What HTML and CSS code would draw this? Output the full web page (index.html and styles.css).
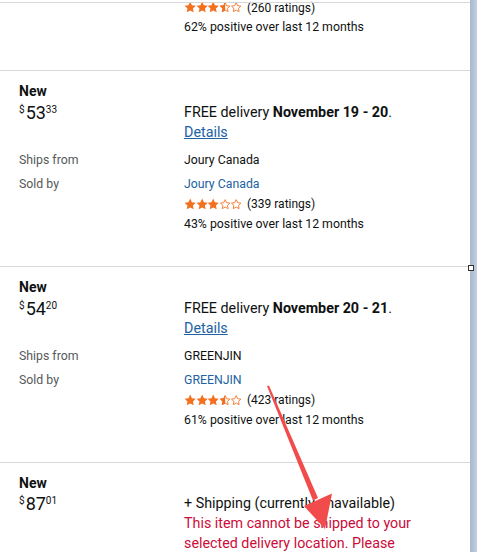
FILE: index.html
```html
<!DOCTYPE html>
<html lang="en">
<head>
<meta charset="utf-8">
<title>Other sellers</title>
<link rel="stylesheet" href="styles.css">
</head>
<body>
<svg class="defs" width="0" height="0" aria-hidden="true">
  <defs>
    <symbol id="s-full" viewBox="0 0 24 24">
      <path d="M12 1.2l3.3 6.9 7.5 1-5.5 5.2 1.4 7.5L12 18.2l-6.7 3.6 1.4-7.5-5.5-5.2 7.5-1z" fill="#f3701f"/>
    </symbol>
    <symbol id="s-empty" viewBox="0 0 24 24">
      <path d="M12 3.2l2.8 5.8 6.3.9-4.6 4.4 1.1 6.3L12 17.6l-5.6 3 1.1-6.3-4.6-4.4 6.3-.9z" fill="none" stroke="#f3701f" stroke-width="1.7" stroke-linejoin="round"/>
    </symbol>
    <clipPath id="half-clip"><rect x="0" y="0" width="12" height="24"/></clipPath>
    <symbol id="s-half" viewBox="0 0 24 24">
      <path d="M12 3.2l2.8 5.8 6.3.9-4.6 4.4 1.1 6.3L12 17.6l-5.6 3 1.1-6.3-4.6-4.4 6.3-.9z" fill="none" stroke="#f3701f" stroke-width="1.7" stroke-linejoin="round"/>
      <path d="M12 1.2l3.3 6.9 7.5 1-5.5 5.2 1.4 7.5L12 18.2l-6.7 3.6 1.4-7.5-5.5-5.2 7.5-1z" fill="#f3701f" clip-path="url(#half-clip)"/>
    </symbol>
  </defs>
</svg>

<div class="frame">
  <main class="offers">
    <section class="offer offer-partial">
      <div class="row">
        <div></div>
        <div class="seller">
          <div class="rating rating-first">
            <span class="stars"><svg><use href="#s-full"/></svg><svg><use href="#s-full"/></svg><svg><use href="#s-full"/></svg><svg><use href="#s-half"/></svg><svg><use href="#s-empty"/></svg></span>
            <span>(260 ratings)</span>
          </div>
          <div class="positive positive-first">62% positive over last 12 months</div>
        </div>
      </div>
    </section>

    <section class="offer">
      <div class="row row-cond"><div class="cond">New</div><div></div></div>
      <div class="row row-price">
        <div class="price"><span class="sym">$</span><span class="whole">53</span><span class="frac">33</span></div>
        <div class="delivery">FREE delivery <b>November 19 - 20</b>.</div>
      </div>
      <div class="row row-details"><div></div><div><a class="link details" href="#">Details</a></div></div>
      <div class="row row-ships"><div class="label">Ships from</div><div class="value">Joury Canada</div></div>
      <div class="row row-sold">
        <div class="label">Sold by</div>
        <div class="seller">
          <a class="link seller-name" href="#">Joury Canada</a>
          <div class="rating">
            <span class="stars"><svg><use href="#s-full"/></svg><svg><use href="#s-full"/></svg><svg><use href="#s-full"/></svg><svg><use href="#s-empty"/></svg><svg><use href="#s-empty"/></svg></span>
            <span>(339 ratings)</span>
          </div>
          <div class="positive">43% positive over last 12 months</div>
        </div>
      </div>
    </section>

    <section class="offer">
      <div class="row row-cond"><div class="cond">New</div><div></div></div>
      <div class="row row-price">
        <div class="price"><span class="sym">$</span><span class="whole">54</span><span class="frac">20</span></div>
        <div class="delivery">FREE delivery <b>November 20 - 21</b>.</div>
      </div>
      <div class="row row-details"><div></div><div><a class="link details" href="#">Details</a></div></div>
      <div class="row row-ships"><div class="label">Ships from</div><div class="value">GREENJIN</div></div>
      <div class="row row-sold">
        <div class="label">Sold by</div>
        <div class="seller">
          <a class="link seller-name" href="#">GREENJIN</a>
          <div class="rating">
            <span class="stars"><svg><use href="#s-full"/></svg><svg><use href="#s-full"/></svg><svg><use href="#s-full"/></svg><svg><use href="#s-half"/></svg><svg><use href="#s-empty"/></svg></span>
            <span>(423 ratings)</span>
          </div>
          <div class="positive">61% positive over last 12 months</div>
        </div>
      </div>
    </section>

    <section class="offer">
      <div class="row row-cond"><div class="cond">New</div><div></div></div>
      <div class="row row-price row-price-last">
        <div class="price"><span class="sym">$</span><span class="whole">87</span><span class="frac">01</span></div>
        <div>
          <div class="delivery">+ Shipping (currently unavailable)</div>
          <div class="warning">This item cannot be shipped to your selected delivery location. Please choose a different delivery location.</div>
        </div>
      </div>
    </section>
  </main>
  <div class="edge"></div>
</div>

<div class="topline"></div>
<div class="handle"></div>
<svg class="arrow" width="477" height="552" viewBox="0 0 477 552" aria-hidden="true">
  <polygon points="267,386 269,385.5 318,498 313,500.5" fill="#f24b4b"/>
  <polygon points="304,506 332,493.5 325,529" fill="#f24b4b"/>
</svg>
</body>
</html>
```

FILE: styles.css
```css
html, body {
  margin: 0;
  padding: 0;
  height: 100%;
  overflow: hidden;
  background: #ffffff;
}

body {
  font-family: Roboto, "Liberation Sans", Arial, sans-serif;
  font-size: 14.3px;
  color: #0f1111;
  position: relative;
}

.defs {
  position: absolute;
  width: 0;
  height: 0;
  overflow: hidden;
}

.frame {
  display: flex;
  height: 100%;
}

.offers {
  width: 470px;
  flex: none;
}

.edge {
  flex: 1;
  background: linear-gradient(to right, #a8b8cf, #c3cfde);
}

.offer {
  border-top: 1px solid #d5d9d9;
  padding: 10px 36px 32px 19px;
}

.offer-partial {
  border-top: none;
  padding-top: 0;
  padding-bottom: 33px;
}

.row {
  display: grid;
  grid-template-columns: 165px 1fr;
}

.row-cond {
  line-height: 20px;
}

.cond {
  font-size: 14px;
  font-weight: 700;
}

.row-price {
  margin-top: 1px;
  line-height: 20px;
}

.row-price-last {
  margin-top: 0;
}

.price {
  display: flex;
  align-items: flex-start;
  height: 20px;
  padding-top: 2px;
  box-sizing: border-box;
}

.price .sym,
.price .frac {
  font-size: 10px;
  line-height: 10px;
  margin-top: 1px;
}

.price .sym {
  margin-right: 1px;
}

.price .whole {
  font-size: 18px;
  line-height: 18px;
}

.delivery b {
  font-weight: 700;
}

.row-details {
  line-height: 20px;
}

.link {
  color: #2162a1;
  text-decoration: none;
}

.details {
  text-decoration: underline;
}

.row-ships {
  margin-top: 8px;
  line-height: 20px;
  font-size: 12.3px;
}

.row-sold {
  margin-top: 4px;
  line-height: 20px;
  font-size: 12.3px;
}

.label {
  color: #565959;
}

.seller-name {
  display: block;
}

.rating {
  display: flex;
  align-items: center;
  gap: 5px;
  height: 20px;
  font-size: 12px;
}

.rating-first {
  height: 15px;
}

.stars {
  display: flex;
}

.stars svg {
  width: 12.4px;
  height: 12.4px;
  margin-right: -0.8px;
}

.positive {
  line-height: 20px;
  font-size: 12.3px;
}

.positive-first {
  margin-top: 2px;
}

.warning {
  color: #cc0c39;
  line-height: 20px;
}

.topline {
  position: absolute;
  left: 0;
  top: 2px;
  width: 470px;
  height: 1px;
  background: #d5d9d9;
}

.handle {
  position: absolute;
  left: 468px;
  top: 265px;
  width: 4px;
  height: 4px;
  border: 1px solid #333;
  background: #fff;
}

.arrow {
  position: absolute;
  left: 0;
  top: 0;
  pointer-events: none;
}
```
